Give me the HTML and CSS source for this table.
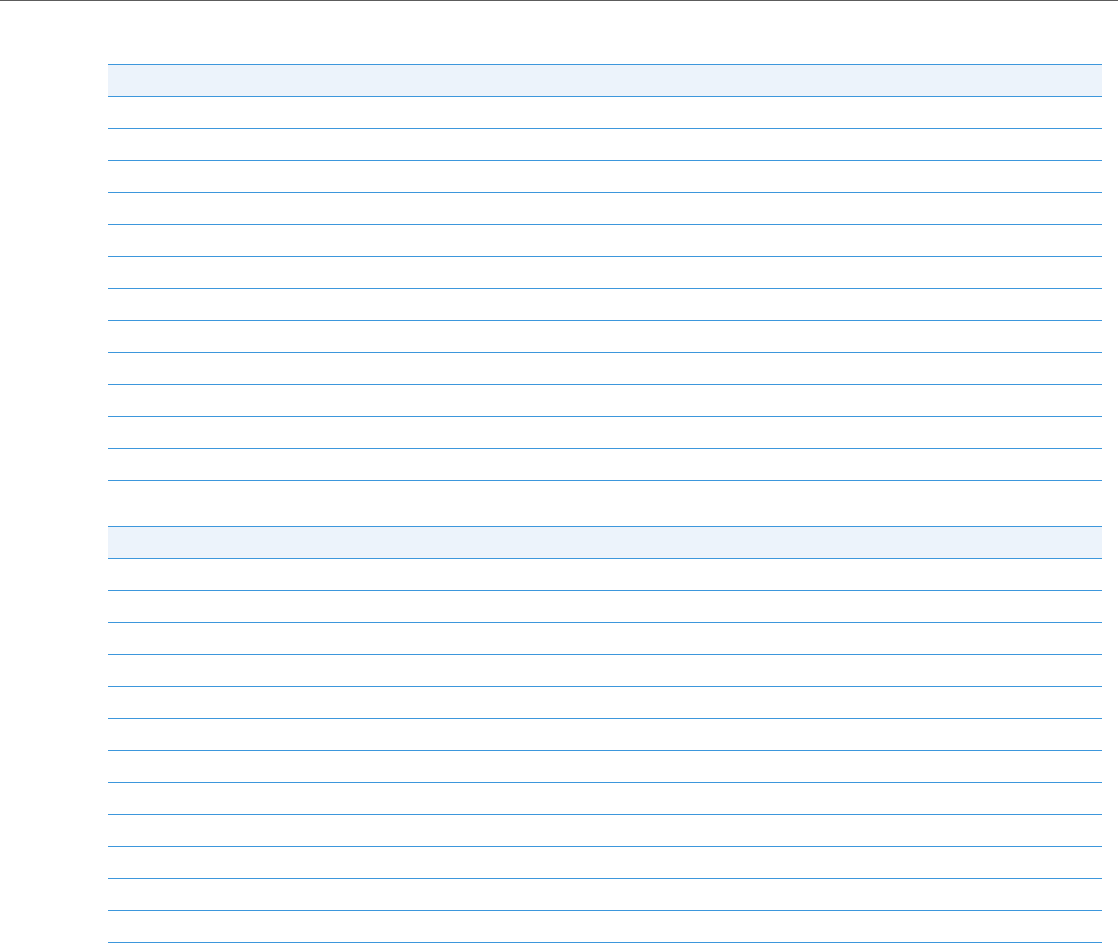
FILE: index.html
```html
<!doctype html>
<html lang="en">
<head>
<meta charset="utf-8">
<meta name="viewport" content="width=device-width,initial-scale=1">
<title>Tables</title>
<link rel="stylesheet" href="styles.css">
</head>
<body>
<main class="page">
<table class="grid">
  <thead><tr><th></th></tr></thead>
  <tbody>
    <tr><td></td></tr><tr><td></td></tr><tr><td></td></tr><tr><td></td></tr>
    <tr><td></td></tr><tr><td></td></tr><tr><td></td></tr><tr><td></td></tr>
    <tr><td></td></tr><tr><td></td></tr><tr><td></td></tr><tr><td></td></tr>
  </tbody>
</table>
<table class="grid">
  <thead><tr><th></th></tr></thead>
  <tbody>
    <tr><td></td></tr><tr><td></td></tr><tr><td></td></tr><tr><td></td></tr>
    <tr><td></td></tr><tr><td></td></tr><tr><td></td></tr><tr><td></td></tr>
    <tr><td></td></tr><tr><td></td></tr><tr><td></td></tr><tr><td></td></tr>
  </tbody>
</table>
</main>
</body>
</html>
```

FILE: styles.css
```css
:root{--line:#3d97dc;--head:#ecf3fb;--top:#5c5c5c}
*{box-sizing:border-box}
html,body{margin:0;background:#fff;font-family:"Liberation Sans",Arial,sans-serif;font-size:14px;color:#333}
body{border-top:1px solid var(--top)}
.page{padding:63px 16px 0 108px;display:flex;flex-direction:column;gap:45px}
.grid{width:994px;border-collapse:collapse;border-top:1px solid var(--line)}
.grid th,.grid td{height:32px;padding:0;border-bottom:1px solid var(--line)}
.grid th{background:var(--head)}
```
